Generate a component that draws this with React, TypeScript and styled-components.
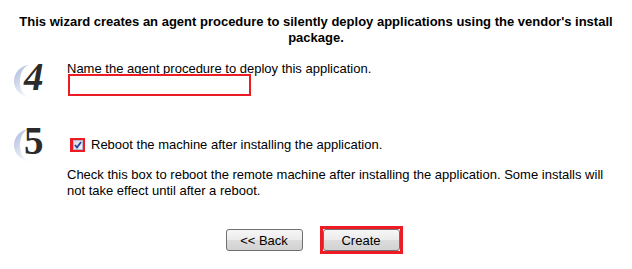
import styled, { createGlobalStyle } from 'styled-components'

const GlobalStyle = createGlobalStyle`
  html, body {
    margin: 0;
    padding: 0;
    background: #fff;
  }
  body {
    font-family: 'Liberation Sans', Arial, sans-serif;
    font-size: 13px;
    color: #000;
  }
`

const Page = styled.div`
  width: 632px;
  height: 269px;
  overflow: hidden;
`

const Title = styled.div`
  font-weight: bold;
  text-align: center;
  line-height: 16px;
  padding: 14px 8px 0;
`

const StepRow = styled.div<{ $top: number }>`
  display: flex;
  align-items: flex-start;
  margin-top: ${p => p.$top}px;
  padding-left: 10px;
`

const Badge = styled.div`
  position: relative;
  width: 57px;
  height: 40px;
  flex-shrink: 0;
`

const Arc = styled.svg`
  position: absolute;
  left: 1px;
  top: 5px;
`

const Digit = styled.span<{ $italic?: boolean }>`
  position: absolute;
  left: 14px;
  top: -1px;
  font-family: 'Liberation Serif', 'Times New Roman', serif;
  font-weight: bold;
  font-style: ${p => (p.$italic ? 'italic' : 'normal')};
  font-size: 39px;
  line-height: 40px;
  color: #2b2b2b;
`

const StepBody = styled.div<{ $pad: number }>`
  display: flex;
  flex-direction: column;
  padding-top: ${p => p.$pad}px;
`

const Label = styled.div`
  line-height: 16px;
`

const NameInput = styled.input`
  box-sizing: border-box;
  width: 183px;
  height: 22px;
  margin: -3px 0 0 1px;
  border: 2px solid #ed1c24;
  outline: none;
  padding: 0 3px;
  font: inherit;
  background: #fff;
`

const CheckRow = styled.label`
  display: flex;
  align-items: center;
  gap: 6px;
  line-height: 16px;
  padding-left: 3px;
`

const CheckFrame = styled.span`
  box-sizing: border-box;
  display: inline-flex;
  align-items: center;
  justify-content: center;
  width: 15px;
  height: 14px;
  background: #ed1c24;
`

const CheckBox = styled.span`
  box-sizing: border-box;
  display: inline-flex;
  align-items: center;
  justify-content: center;
  width: 10px;
  height: 10px;
  background: linear-gradient(135deg, #d9dbe6, #f4f4f8);
  border: 1px solid #b4b9cc;
`

const Help = styled.p`
  margin: 14px 0 0;
  line-height: 16px;
  width: 545px;
`

const Buttons = styled.div`
  display: flex;
  justify-content: center;
  align-items: center;
  gap: 17px;
  margin-top: 27px;
  padding-right: 4px;
`

const Flag = styled.span`
  display: inline-flex;
  border: 3px solid #ed1c24;
`

const Button = styled.button`
  box-sizing: border-box;
  width: 77px;
  height: 22px;
  font-family: 'Liberation Sans', Arial, sans-serif;
  font-size: 13px;
  color: #000;
  border: 1px solid #707070;
  border-radius: 3px;
  background: linear-gradient(#f6f6f6 0%, #ebebeb 50%, #dcdcdc 51%, #d2d2d2 100%);
  padding: 0;
`

function StepNumber({ n, italic }: { n: string; italic?: boolean }) {
  return (
    <Badge>
      <Arc width="36" height="36" viewBox="0 0 36 36">
        <defs>
          <linearGradient id={`arc${n}`} x1="0" y1="0" x2="0.5" y2="1">
            <stop offset="0" stopColor="#a8b6da" />
            <stop offset="0.6" stopColor="#d4dcee" />
            <stop offset="1" stopColor="#f2f4fa" />
          </linearGradient>
        </defs>
        <path
          d="M19 2 A16 16 0 1 0 19 34 A10 16 0 1 1 19 2 Z"
          fill={`url(#arc${n})`}
        />
      </Arc>
      <Digit $italic={italic}>{n}</Digit>
    </Badge>
  )
}

function App() {
  return (
    <Page>
      <GlobalStyle />
      <Title>
        This wizard creates an agent procedure to silently deploy applications using the vendor's install package.
      </Title>

      <StepRow $top={12}>
        <StepNumber n="4" italic />
        <StepBody $pad={3}>
          <Label>Name the agent procedure to deploy this application.</Label>
          <NameInput />
        </StepBody>
      </StepRow>

      <StepRow $top={24}>
        <StepNumber n="5" />
        <StepBody $pad={15}>
          <CheckRow>
            <CheckFrame>
              <CheckBox>
                <svg width="8" height="8" viewBox="0 0 8 8">
                  <path d="M1 4 L3 6.5 L7 1" stroke="#2a3f9a" strokeWidth="1.8" fill="none" />
                </svg>
              </CheckBox>
            </CheckFrame>
            Reboot the machine after installing the application.
          </CheckRow>
          <Help>
            Check this box to reboot the remote machine after installing the application. Some installs will not take effect until after a reboot.
          </Help>
        </StepBody>
      </StepRow>

      <Buttons>
        <Button>&lt;&lt; Back</Button>
        <Flag>
          <Button>Create</Button>
        </Flag>
      </Buttons>
    </Page>
  )
}

export default App
